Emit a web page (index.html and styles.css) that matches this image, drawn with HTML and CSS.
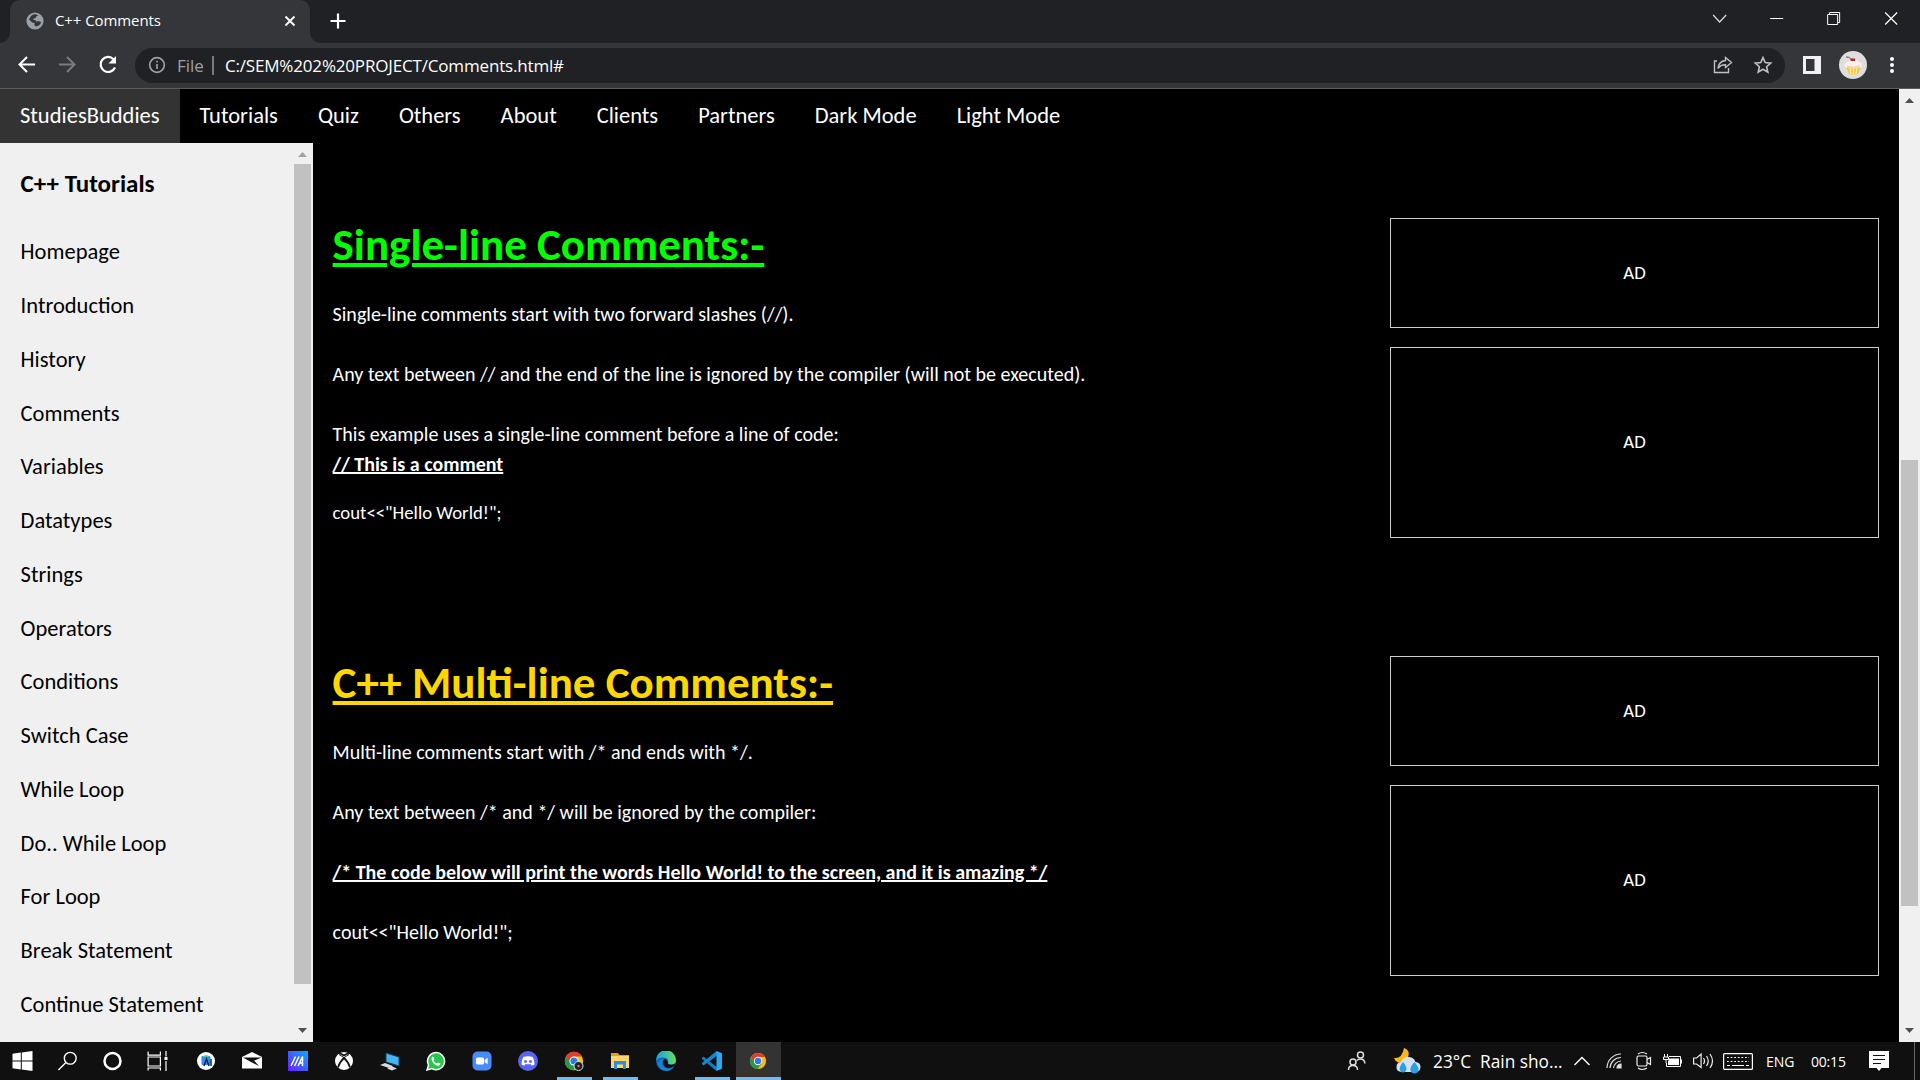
FILE: index.html
```html
<!DOCTYPE html>
<html lang="en">
<head>
<meta charset="utf-8">
<title>C++ Comments</title>
<link rel="stylesheet" href="styles.css">
</head>
<body>
<header class="tabstrip">
  <div class="tab">
    <svg class="favicon" width="18" height="18" viewBox="0 0 18 18"><circle cx="9" cy="9" r="8.6" fill="#9aa0a6"/><path d="M9 2.2c-1.500 0-3.200.8-4.200 2L3 7.500l3.200 3 2.400.4-.2 2.300 1.500 1.300c2.500-.2 4.600-2 5.300-4.300l-2.700-1.100-2.200.6-.8-1.800-2.200.2.200-1.700 2-.2.600-1.600 2-.9C11.300 2.700 10.200 2.200 9 2.200z" fill="#35363a"/></svg>
    <span class="tab-title">C++ Comments</span>
    <svg width="12" height="12" viewBox="0 0 12 12" fill="none" stroke="#fff" stroke-width="1.900"><path d="M1.500 1.500l9 9M10.500 1.500l-9 9"/></svg>
  </div>
  <svg class="new-tab" width="16" height="16" viewBox="0 0 16 16" stroke="#fff" stroke-width="2.200"><path d="M8 .5v15M.5 8h15"/></svg>
  <div class="window-buttons">
    <svg viewBox="0 0 57 36" fill="none" stroke="#ddd" stroke-width="1.200"><path d="M22 15l6.500 7 6.500-7"/></svg>
    <svg viewBox="0 0 57 36" stroke="#fff"><path d="M22 18.500h13"/></svg>
    <svg viewBox="0 0 57 36" fill="none" stroke="#fff"><path d="M22.500 14.500h10v10h-10zM24.500 14v-1.500h10v10H33"/></svg>
    <svg viewBox="0 0 57 36" fill="none" stroke="#fff" stroke-width="1.200"><path d="M22 12.500l12 12M34 12.500l-12 12"/></svg>
  </div>
</header>
<div class="toolbar">
  <svg width="40" height="40" viewBox="0 0 40 40" fill="none" stroke="#fff" stroke-width="2"><path d="M28 19.500H13M20 12l-7.500 7.500L20 27"/></svg>
  <svg width="40" height="40" viewBox="0 0 40 40" fill="none" stroke="#7b7c7f" stroke-width="2"><path d="M12 19.500h15M20 12l7.500 7.500L20 27"/></svg>
  <svg width="40" height="40" viewBox="0 0 40 40" fill="none" stroke="#fff" stroke-width="2.200"><path d="M28 22.500a7.500 7.500 0 1 1-1.500-8.300"/><path d="M29 11v7.500h-7.500z" fill="#fff" stroke="none"/></svg>
  <div class="omnibox">
    <svg width="18" height="18" viewBox="0 0 18 18" fill="none" stroke="#9aa0a6" stroke-width="1.700"><circle cx="9" cy="9" r="7.300"/><path d="M9 8v5M9 4.700v1.800"/></svg>
    <span class="scheme">File</span>
    <span class="url">C:/SEM%202%20PROJECT/Comments.html#</span>
    <svg width="20" height="20" viewBox="0 0 20 20" fill="none" stroke="#bdc1c6" stroke-width="1.400"><path d="M4 6H1.500v11.500h14V13M12.500 2.500l6 5-6 5V9.700c-3.500 0-5.800 1-7.500 3.800.4-4.300 3-7.500 7.500-8z"/></svg>
    <svg class="star" width="20" height="20" viewBox="0 0 20 20" fill="none" stroke="#bdc1c6" stroke-width="1.600"><path d="M10 2.600l2.200 5 5.500.5-4.100 3.600 1.200 5.400-4.800-2.900-4.800 2.900 1.200-5.400L2.300 8.100l5.500-.5z"/></svg>
  </div>
  <svg class="panel" width="18" height="18" viewBox="0 0 18 18"><path d="M0 0h18v18H0z" fill="#f1f1f5"/><path d="M3 3h8.500v12H3z" fill="#35363a"/></svg>
  <svg class="avatar" width="28" height="28" viewBox="0 0 28 28"><circle cx="14" cy="14" r="14" fill="#dedede"/><path d="M7 16l3 7q4 1.500 9 0L22 16z" fill="#f3c747"/><path d="M11 17l1 6M14.500 17v7M18 17l-1 6" stroke="#fff0a8" stroke-width="1.200"/><path d="M5.500 14.500q0-3 3-3.500 2-3 5.500-3t5.500 3q3.500.5 3.500 3.500 0 2.500-4 2-4.500 2-9 0-4.500.5-4.500-2z" fill="#fff0e4"/><path d="M11.500 7.500h4.500v2.500h-4.500z" fill="#c31f2c"/><path d="M7 6q3-.5 5 2" stroke="#555" fill="none"/><path d="M8 15q6 3 13-.5" stroke="#e5b391" stroke-width=".8" fill="none"/></svg>
  <svg class="menu-dots" width="6" height="18" viewBox="0 0 6 18" fill="#fff"><circle cx="3" cy="3" r="2"/><circle cx="3" cy="9" r="2"/><circle cx="3" cy="15" r="2"/></svg>
</div>

<div class="page">
  <div class="document">
    <nav class="topnav">
      <a class="brand">StudiesBuddies</a><a>Tutorials</a><a>Quiz</a><a>Others</a><a>About</a><a>Clients</a><a>Partners</a><a>Dark Mode</a><a>Light Mode</a>
    </nav>
    <div class="columns">
      <aside class="sidebar">
        <div class="links">
          <h4>C++ Tutorials</h4>
          <a>Homepage</a><a>Introduction</a><a>History</a><a>Comments</a><a>Variables</a><a>Datatypes</a><a>Strings</a><a>Operators</a><a>Conditions</a><a>Switch Case</a><a>While Loop</a><a>Do.. While Loop</a><a>For Loop</a><a>Break Statement</a><a>Continue Statement</a>
        </div>
        <div class="scrollbar">
          <svg class="arrow" width="9" height="5" viewBox="0 0 9 5" fill="#a3a3a3"><path d="M0 5l4.500-5L9 5z"/></svg>
          <div class="thumb"></div>
          <svg class="arrow" width="9" height="5" viewBox="0 0 9 5" fill="#505050"><path d="M0 0l4.500 5L9 0z"/></svg>
        </div>
      </aside>
      <main>
        <section>
          <article>
            <h1 class="green">Single-line Comments:-</h1>
            <p>Single-line comments start with two forward slashes (//).<br><br>Any text between // and the end of the line is ignored by the compiler (will not be executed).<br><br>This example uses a single-line comment before a line of code:<br><b>// This is a comment</b></p>
            <p class="small">cout&lt;&lt;"Hello World!";</p>
          </article>
          <div class="ads"><div class="ad">AD</div><div class="ad tall">AD</div></div>
        </section>
        <section>
          <article>
            <h1 class="gold">C++ Multi-line Comments:-</h1>
            <p>Multi-line comments start with /* and ends with */.<br><br>Any text between /* and */ will be ignored by the compiler:<br><br><b>/* The code below will print the words Hello World! to the screen, and it is amazing */</b><br><br>cout&lt;&lt;"Hello World!";</p>
          </article>
          <div class="ads"><div class="ad">AD</div><div class="ad tall">AD</div></div>
        </section>
      </main>
    </div>
  </div>
  <div class="scrollbar page-scroll">
    <svg class="arrow" width="9" height="5" viewBox="0 0 9 5" fill="#505050"><path d="M0 5l4.500-5L9 5z"/></svg>
    <div class="thumb"></div>
    <svg class="arrow" width="9" height="5" viewBox="0 0 9 5" fill="#505050"><path d="M0 0l4.500 5L9 0z"/></svg>
  </div>
</div>

<footer class="taskbar">
  <div class="system">
    <svg width="20" height="20" viewBox="0 0 20 20" fill="#fff"><path d="M0 2.800l8.300-1.200v8H0zM9.300 1.400L20 0v9.600H9.300zM0 10.500h8.300v8L0 17.300zM9.300 10.500H20V20L9.300 18.600z"/></svg>
    <svg width="22" height="22" viewBox="0 0 22 22" fill="none" stroke="#fff" stroke-width="1.500"><circle cx="14" cy="8" r="6.500"/><path d="M9.300 12.700L1 21"/></svg>
    <svg width="20" height="20" viewBox="0 0 20 20" fill="none" stroke="#fff" stroke-width="2.500"><circle cx="10" cy="10" r="8"/></svg>
    <svg width="20" height="20" viewBox="0 0 20 20" fill="none" stroke="#fff" stroke-width="1.200"><path d="M.6.500v3.600h12.300V.5M.6 6h12.300v9H.6zM.6 19.500V17h12.300v2.500M18.500 0v5.500M18.500 10v10"/><path d="M17 6h3v3h-3z" fill="#fff" stroke="none"/></svg>
  </div>
  <div class="apps">
    <div class="app"><svg width="20" height="20" viewBox="0 0 20 20"><circle cx="10" cy="10" r="9" fill="#fff"/><rect x="5.500" y="5" width="9" height="9" rx="1" fill="#4285f4"/><path d="M6.500 6q3.500-4 7 0z" fill="#3ddc84"/><path d="M8 15l2.500-7 2.500 7M15 8v7" stroke="#073042" stroke-width="1.500" fill="none"/></svg></div>
    <div class="app"><svg width="20" height="20" viewBox="0 0 20 20"><path d="M0 6l10-5 10 5v11.500H0z" fill="#fff"/><path d="M1 6.500h18.500L9 11zM9 11l8 4-5-5.500z" fill="#111"/></svg></div>
    <div class="app"><svg width="20" height="20" viewBox="0 0 20 20"><defs><linearGradient id="armoury" x2="1" y1="1" y2="0"><stop stop-color="#6a1cff"/><stop offset="1" stop-color="#0aaaff"/></linearGradient></defs><path d="M0 0h20v20H0z" fill="url(#armoury)"/><path d="M3 15L7.500 5.500M6.500 15l4.500-9.500M10 15l4.500-9.500v9.500M11 12h4" stroke="#fff" stroke-width="1.500" fill="none"/></svg></div>
    <div class="app"><svg width="20" height="20" viewBox="0 0 20 20"><circle cx="10" cy="10" r="9" fill="#fff"/><path d="M5 2.500q2.500 0 5 2 2.500-2 5-2M4 16.500Q5.500 11 10 7q4.500 4 6 9.500" fill="none" stroke="#111" stroke-width="1.700"/><path d="M5 3.500Q8 5 10 7q2-2 5-3.500" fill="none" stroke="#111"/></svg></div>
    <div class="app"><svg width="20" height="20" viewBox="0 0 20 20"><path d="M6 2l13 4v9L6 11z" fill="#45b6f5" stroke="#173f62"/><path d="M0 14l5-2 8 3-4 2zM7 17.500l5-2 5 2-5 2z" fill="#d5dde2"/></svg></div>
    <div class="app"><svg width="20" height="20" viewBox="0 0 20 20"><path d="M1 19l1.500-5A8.500 8.500 0 1 1 6 17.600z" fill="#29c64d" stroke="#fff" stroke-width="1.500"/><path d="M7 5.500l1.500 2.700-1 1.200q1.200 2.200 3.400 3.200l1.200-1.200 2.500 1.400q-.4 2.200-2.600 2Q6.500 13.500 5.500 8q0-2 1.500-2.500z" fill="#fff"/></svg></div>
    <div class="app"><svg width="20" height="20" viewBox="0 0 20 20"><rect x=".5" y=".5" width="19" height="19" rx="5" fill="#4a8cf7"/><rect x="4" y="6.500" width="8" height="7" rx="1.500" fill="#fff"/><path d="M12.600 9l3-2.300v6.600l-3-2.300z" fill="#fff"/></svg></div>
    <div class="app"><svg width="20" height="20" viewBox="0 0 20 20"><circle cx="10" cy="10" r="10" fill="#5865f2"/><path d="M7.500 5.500q2.500-.7 5 0 1.500 0 2.500 1 1.500 3 1.500 7l-2.700 1.200-1-1.400H7.200l-1 1.400-2.700-1.200q0-4 1.500-7 1-1 2.500-1z" fill="#fff"/><circle cx="7.500" cy="10.500" r="1.400" fill="#5865f2"/><circle cx="12.500" cy="10.500" r="1.400" fill="#5865f2"/></svg></div>
    <div class="app open"><svg width="20" height="20" viewBox="0 0 20 20"><circle cx="10" cy="10" r="9.200" fill="#f9bf17"/><path d="M2 5.500A9.200 9.200 0 0 1 18 5.500H10L5.500 12z" fill="#e33b2e"/><path d="M2 5.500A9.200 9.200 0 0 0 9.500 19.200L13.500 13 7 13z" fill="#269847"/><circle cx="10" cy="10" r="4.600" fill="#fff"/><circle cx="10" cy="10" r="3.600" fill="#2c7bea"/><circle cx="14.500" cy="15" r="4.500" fill="#222" stroke="#bfe3ff"/><circle cx="14.500" cy="15" r="1.200" fill="#f06a4a"/></svg></div>
    <div class="app open"><svg width="20" height="20" viewBox="0 0 20 20"><path d="M1 2h7l1.500 2H19v4H1z" fill="#dfa01c"/><path d="M1 5h18v12H1z" fill="#ffd768"/><path d="M4 18v-8h12v8h-3v-4.500H7V18z" fill="#2d8fd5"/></svg></div>
    <div class="app"><svg width="20" height="20" viewBox="0 0 20 20"><defs><linearGradient id="edge"><stop stop-color="#1a9fe5"/><stop offset="1" stop-color="#67dd5b"/></linearGradient></defs><circle cx="10" cy="10" r="10" fill="#0f65b9"/><path d="M0 9.500A10 10 0 0 1 20 9q0 4.500-5 4.500-4 0-3-2Q13 7 8 6.500 3 6 0 9.500z" fill="url(#edge)"/><path d="M8 8q-3 4 1 8 4 2.500 9-.5l2-4q-2 2.500-5 2.300-3.500-.3-3-2.300Q11 8 8 8z" fill="#111"/><path d="M8 8q-3.500 4 0 8 4 3.500 10-.5Q15 20 10 20 2 19 2 12q1-4 6-4z" fill="#1683d0"/></svg></div>
    <div class="app open"><svg width="20" height="20" viewBox="0 0 20 20"><path d="M0 7l1.500-1.500L16 17l-1.500 3L0 8z" fill="#1479bd"/><path d="M0 13l1.500 1.500L16 4 14.500 0 0 12z" fill="#1687ce"/><path d="M14.500 0L20 2.300v15.400L14.500 20z" fill="#2aa9f2"/></svg></div>
    <div class="app open active"><svg width="18" height="18" viewBox="0 0 20 20"><circle cx="10" cy="10" r="9" fill="#f9bf17"/><path d="M2.200 5.500A9 9 0 0 1 17.800 5.500H10L5.500 12z" fill="#e33b2e"/><path d="M2.200 5.500A9 9 0 0 0 9.500 19L14 13 7 13z" fill="#269847"/><circle cx="10" cy="10" r="4.600" fill="#fff"/><circle cx="10" cy="10" r="3.600" fill="#2c7bea"/></svg></div>
  </div>
  <div class="tray">
    <svg class="people" width="19" height="20" viewBox="0 0 19 20" fill="none" stroke="#ddd" stroke-width="1.500"><circle cx="6" cy="11" r="3"/><path d="M1.500 19q0-4.500 4.500-4.500t4.500 4.500"/><circle cx="13.500" cy="4" r="3"/><path d="M10 9.500q1-1.500 3.500-1.500 4 0 4.500 4.500"/></svg>
    <svg class="weather" width="28" height="28" viewBox="0 0 28 28"><path d="M11 1q6 2 4.500 8T5 15.500Q2 14 1 11q8 1 10-10z" fill="#fbb61f"/><path d="M8 25q-5-1-4.500-5.500T8 15q2-5 7-5 6 0 7.500 5 5 .5 5 5T23 25z" fill="#d3e1f7"/><path d="M10 15q-4 5-3.300 7.500Q7.500 25.500 10 25.500t3.500-3Q13.500 19 10 15zM21.500 15q-5 5.500-4 8.500.8 3 4 3t4-3q.5-3.500-4-8.500z" fill="#2a9fe3"/></svg>
    <span class="forecast">23°C&nbsp; Rain sho...</span>
    <svg class="up" width="16" height="10" viewBox="0 0 16 10" fill="none" stroke="#fff" stroke-width="1.400"><path d="M.5 9L8 1.500 15.500 9"/></svg>
    <svg class="wifi" width="16" height="16" viewBox="0 0 16 16" fill="none" stroke="#ddd" stroke-width="1.200"><path d="M1 15A14 14 0 0 1 15 1M4 15A11 11 0 0 1 15 4.500M7.500 15A8 8 0 0 1 15 8"/><path d="M11 15a4 4 0 0 1 4-4v4z" fill="#ddd"/></svg>
    <svg class="meet" width="16" height="20" viewBox="0 0 16 20" fill="none" stroke="#eee" stroke-width="1.200"><rect x="1" y="5" width="10" height="10" rx="1.500"/><path d="M11 8.500l3.500-2v7l-3.500-2M2 3q4-3 9 0M2 17q4 3 9 0"/></svg>
    <svg class="battery" width="20" height="14" viewBox="0 0 20 14" fill="none" stroke="#fff"><path d="M6 2.500h11.500v10h-14V9M18.500 5.500v4"/><path d="M6 4.500h10v6.500H5V8z" fill="#fff" stroke="none"/><path d="M1.500 0v3M4.500 0v3M.5 3h5v2.500h-5zM3 5v4"/></svg>
    <svg class="sound" width="21" height="18" viewBox="0 0 21 18" fill="none" stroke="#eee" stroke-width="1.200"><path d="M.6 6h3l4.500-4v13.500L3.600 12h-3zM10.500 6q2 3 0 6M13.500 4q3.500 5 0 10M17 2q5 7 0 14"/></svg>
    <svg class="keyboard" width="30" height="17" viewBox="0 0 30 17" fill="none" stroke="#fff" stroke-width="1.200"><rect x=".6" y=".6" width="28.800" height="15.800" rx="1"/><path d="M4 4.500h22M4 8.500h22" stroke-dasharray="1.800 1.800"/><path d="M4 12.500h3M9 12.500h12M23 12.500h3"/></svg>
    <span class="lang">ENG</span>
    <span class="clock">00:15</span>
    <svg class="notice" width="20" height="20" viewBox="0 0 20 20"><path d="M0 0h20v17h-7.500L10 20l-2.500-3H0z" fill="#fff"/><path d="M4 4.500h12M4 8.500h12M4 12.500h8" stroke="#111" stroke-width="1.200"/></svg>
  </div>
</footer>
</body>
</html>
```
FILE: styles.css
```css
* { box-sizing: border-box; }
body {
  margin: 0;
  width: 1920px;
  height: 1080px;
  overflow: hidden;
  display: flex;
  flex-direction: column;
  background: #000;
  color: #fff;
  font: 18.75px/1.5 Carlito, Calibri, Lato, sans-serif;
}
svg { display: block; flex: none; }

/* Browser frame */
.tabstrip {
  height: 43px;
  flex: none;
  display: flex;
  background: #202124;
  font: 15px "Segoe UI", "Open Sans", sans-serif;
}
.tab {
  position: relative;
  width: 300px;
  margin-left: 10px;
  padding: 0 14px 2px 16px;
  display: flex;
  align-items: center;
  background: #35363a;
  border-radius: 10px 10px 0 0;
}
.tab::before, .tab::after {
  content: "";
  position: absolute;
  bottom: 0;
  width: 10px;
  height: 10px;
}
.tab::before { left: -10px; background: radial-gradient(circle at 0 0, transparent 9.5px, #35363a 10px); }
.tab::after { right: -10px; background: radial-gradient(circle at 100% 0, transparent 9.5px, #35363a 10px); }
.tab-title { flex: 1; margin: 0 0 1px 11px; letter-spacing: -.08px; }
.new-tab { margin: 13px 0 0 19.5px; }
.window-buttons { margin-left: auto; display: flex; }
.window-buttons svg { width: 57.3px; height: 36px; }

.toolbar {
  height: 46px;
  flex: none;
  display: flex;
  align-items: center;
  padding: 0 0 1px 7px;
  background: #35363a;
  border-bottom: 1px solid #5b5c5f;
  font: 17px "Segoe UI", "Open Sans", sans-serif;
}
.omnibox {
  width: 1650px;
  height: 35px;
  margin-left: 8px;
  padding: 0 12px 0 13px;
  display: flex;
  align-items: center;
  background: #202124;
  border-radius: 18px;
}
.scheme {
  color: #9aa0a6;
  margin-left: 11px;
  padding-right: 8px;
  line-height: 19px;
  border-right: 2px solid #77797d;
}
.url { flex: 1; margin-left: 11px; letter-spacing: -.17px; }
.star { margin-left: 20px; }
.panel { margin-left: 18px; }
.avatar { margin-left: 18px; }
.menu-dots { margin-left: 22px; }

/* Web page */
.page { height: 953px; flex: none; display: flex; }
.document { flex: 1; display: flex; flex-direction: column; }
.topnav { display: flex; flex: none; font-size: 22.5px; }
.topnav a { padding: 10px 20px; }
.topnav .brand { background: #333; }
.columns { flex: 1; min-height: 0; display: flex; }
.sidebar {
  width: 313px;
  flex: none;
  display: flex;
  overflow: hidden;
  background: #f0f0f0;
  color: #000;
}
.links { flex: 1; display: flex; flex-direction: column; font-size: 22.5px; }
.links h4 { margin: 22px 0 23px 20.6px; font-size: 25px; }
.links a { padding: 10px 20px 10px 20.6px; }
.scrollbar {
  width: 20px;
  flex: none;
  padding: 9px 1px 9px 0;
  display: flex;
  flex-direction: column;
  align-items: center;
  background: #f0f0f0;
}
.scrollbar .thumb { width: 17px; height: 820px; margin-top: 7px; background: #c1c1c1; }
.scrollbar .arrow:last-child { margin-top: auto; }
.page-scroll { width: 21px; padding: 9px 0; }
.page-scroll .thumb { height: 446px; margin-top: 357px; }

main { flex: 1; padding: 60px 20px 0 19.6px; }
section { height: 438px; display: flex; justify-content: space-between; }
article { padding-top: 8.5px; font-size: 20px; }
h1 {
  margin: 0 0 20px;
  font-size: 45px;
  text-decoration: underline 4px;
  text-underline-offset: 3px;
}
h1.green { color: #0f0; }
h1.gold { color: #ffd700; }
p { margin: 0 0 20px; }
p.small { font-size: 18.75px; }
b { text-decoration: underline 2px; text-underline-offset: 1px; }
.ads { width: 489px; padding-top: 15px; }
.ad {
  height: 110px;
  margin-bottom: 19px;
  display: flex;
  align-items: center;
  justify-content: center;
  border: 1px solid #ccc;
}
.ad.tall { height: 191px; margin: 0; }

/* Taskbar */
.taskbar {
  height: 38px;
  flex: none;
  display: flex;
  align-items: stretch;
  background: #101010;
  font-family: "Segoe UI", "Open Sans", sans-serif;
}
.system { display: flex; width: 183px; }
.system svg { width: 45px; height: 20px; margin-top: 9px; }
.apps { display: flex; }
.app { width: 46px; padding: 9px 5px 0; display: flex; flex-direction: column; align-items: center; }
.app svg { height: 20px; }
.app.open::after { content: ""; width: 35px; height: 3px; margin-top: 6px; background: #76b9ed; }
.app.active { width: 45px; margin-left: 1px; padding: 9px 1px 0 0; background: #333; }
.app.active::after { width: 45px; margin-right: -1px; }
.tray {
  flex: 1;
  margin-right: 5px;
  border-right: 1px solid #666;
  display: flex;
  align-items: center;
  font-size: 14px;
}
.people { margin-left: 566px; }
.weather { margin-left: 27px; }
.forecast { margin: 2px 0 0 12px; font-size: 17.3px; width: 129px; white-space: nowrap; }
.up { margin-left: 12px; }
.wifi { margin-left: 16px; }
.meet { margin-left: 14px; }
.battery { margin-left: 11px; }
.sound { margin-left: 10px; }
.keyboard { margin-left: 9px; }
.lang { margin-left: 13px; width: 29px; }
.clock { margin-left: 16px; width: 36px; letter-spacing: -.2px; }
.notice { margin-left: 22px; }
```
